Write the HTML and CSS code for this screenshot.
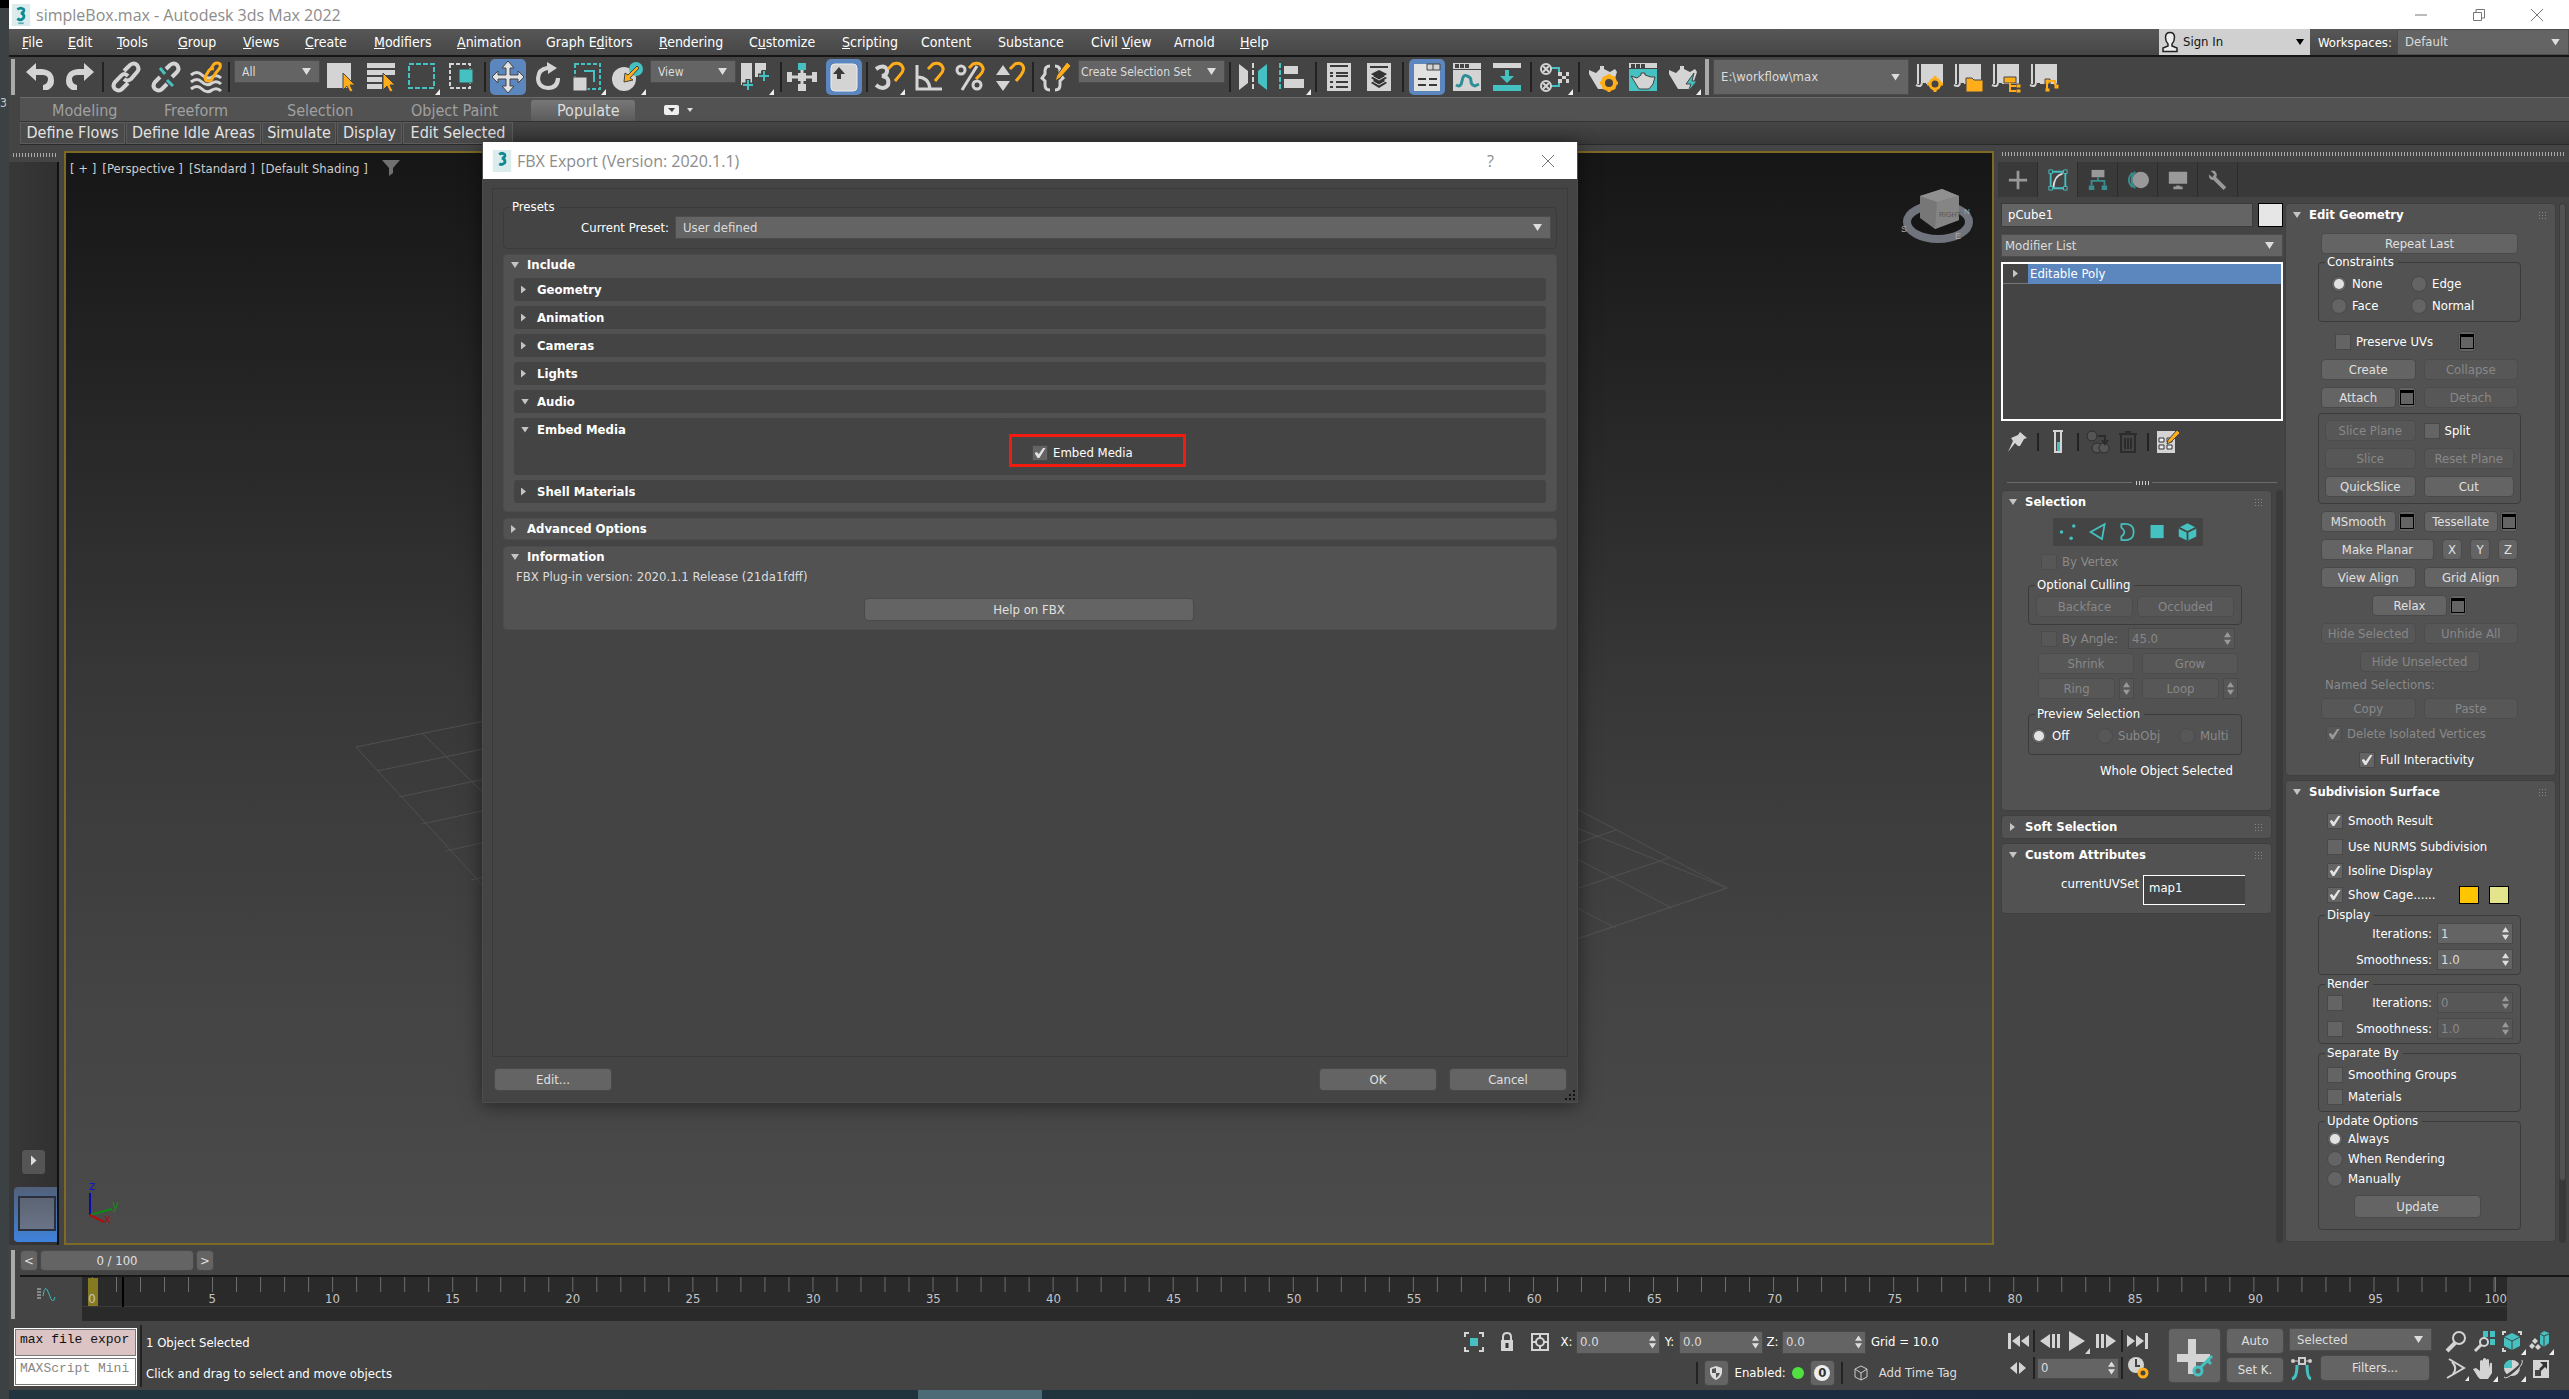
FILE: index.html
```html
<!DOCTYPE html>
<html lang="en">
<head>
<meta charset="utf-8">
<title>simpleBox.max - Autodesk 3ds Max 2022</title>
<link rel="stylesheet" href="styles.css">
</head>
<body>
<div class="backdrop" aria-hidden="true"><span>3</span></div>
<div class="app">
  <header class="titlebar">
    <svg class="logo" viewBox="0 0 20 24"><rect width="20" height="24" fill="#dcecec"/><path d="M6 6q4-3 7 0q1 3-3 4q4 1 3 5q-3 4-7 1" fill="none" stroke="#0f8a92" stroke-width="3"/><path d="M7 21h6" stroke="#58b4b8" stroke-width="2"/></svg>
    <h1>simpleBox.max - Autodesk 3ds Max 2022</h1>
    <div class="winctl">
      <button aria-label="Minimize"><svg viewBox="0 0 14 14"><path d="M1 7h12" stroke="#777"/></svg></button>
      <button aria-label="Restore"><svg viewBox="0 0 14 14"><path d="M1.500 4.500h8v8h-8zM4 4V1.500h8.500V10H10" fill="none" stroke="#777"/></svg></button>
      <button aria-label="Close"><svg viewBox="0 0 14 14"><path d="M1 1l12 12M13 1L1 13" stroke="#777"/></svg></button>
    </div>
  </header>

  <nav class="menubar">
    <div class="menus">
      <a href="#"><u>F</u>ile</a><a href="#"><u>E</u>dit</a><a href="#"><u>T</u>ools</a><a href="#"><u>G</u>roup</a><a href="#"><u>V</u>iews</a><a href="#"><u>C</u>reate</a><a href="#"><u>M</u>odifiers</a><a href="#"><u>A</u>nimation</a><a href="#">Graph E<u>d</u>itors</a><a href="#"><u>R</u>endering</a><a href="#">C<u>u</u>stomize</a><a href="#"><u>S</u>cripting</a><a href="#">Content</a><a href="#">Substance</a><a href="#">Civil <u>V</u>iew</a><a href="#">Arnold</a><a href="#"><u>H</u>elp</a>
    </div>
    <button class="signin"><svg width="18" height="22" viewBox="0 0 18 22"><path d="M9 1.500c3 0 4.500 2 4.500 5S12 12 11 13v2l5 2v3.500H2V17l5-2v-2c-1-1-2.500-3.500-2.500-6.500s1.500-5 4.500-5z" fill="#eee" stroke="#222" stroke-width="1.500"/></svg><span>Sign In</span><i class="tri"></i></button>
    <label class="ws-label" for="ws">Workspaces:</label>
    <span class="sel ws"><select id="ws"><option>Default</option></select></span>
  </nav>

  <div class="toolbar">
    <i class="vgrip"></i>
    <button class="tool" aria-label="Undo"><svg viewBox="0 0 36 36"><path d="M14 4v6h6q12 1 12 12q0 6-6 9h-5v-5q5-1 5-6q0-4-6-4h-6v6L4 13z" fill="#d4d4d4"/></svg></button>
    <button class="tool" aria-label="Redo"><svg viewBox="0 0 36 36"><path d="M22 4v6h-6Q4 11 4 22q0 6 6 9h5v-5q-5-1-5-6q0-4 6-4h6v6l10-9z" fill="#d4d4d4"/></svg></button>
    <i class="sep"></i>
    <button class="tool" aria-label="Link"><svg viewBox="0 0 36 36" fill="none" stroke="#d4d4d4" stroke-width="4"><path d="M16 12l6-6q4-3 7 0q3 4 0 7l-6 7q-4 3-7 0"/><path d="M20 17q-4-4-7 0l-6 6q-3 4 0 7q4 3 7 0l6-6"/></svg></button>
    <button class="tool" aria-label="Unlink"><svg viewBox="0 0 36 36" fill="none" stroke="#d4d4d4" stroke-width="4"><path d="M18 10l4-4q4-3 7 0q3 4 0 7l-5 5"/><path d="M12 18l-5 5q-3 4 0 7q4 3 7 0l5-5"/><path d="M12 9l5 6M19 21l6 6" stroke="#45c1c1" stroke-width="3"/></svg></button>
    <button class="tool" aria-label="Bind to space warp"><svg viewBox="0 0 36 36" fill="none"><path d="M3 16q6-5 11 0t10 2q5-3 9 1M3 23q6-5 11 0t10 1q5-3 9 1M3 30q6-5 11 0t10 1q5-3 9 1" stroke="#d4d4d4" stroke-width="3"/><path d="M22 11l4-6q3-2 6 0q1 3-1 5l-4 5M26 10q-4-1-6 3l-3 5q0 4 3 4q3 0 4-2l3-5" stroke="#ffae1a" stroke-width="3"/></svg></button>
    <i class="sep"></i>
    <span class="sel short"><select aria-label="Selection filter"><option>All</option></select></span>
    <button class="tool" aria-label="Select object"><svg viewBox="0 0 36 36"><path d="M3 4h24v25H3z" fill="#d4d4d4"/><path d="M19 14v17l4-4 3 6 3-1-3-6h5z" fill="#ffae1a" stroke="#444"/></svg></button>
    <button class="tool" aria-label="Select by name"><svg viewBox="0 0 36 36"><path d="M3 4h28v5H3zM3 11h28v5H3zM3 18h15v5H3zM3 25h15v5H3z" fill="#d4d4d4"/><path d="M19 14v17l4-4 3 6 3-1-3-6h5z" fill="#ffae1a" stroke="#444"/></svg></button>
    <button class="tool" aria-label="Rectangular region"><svg viewBox="0 0 36 36"><path d="M5 5h25v24H5z" fill="none" stroke="#45c1c1" stroke-width="2" stroke-dasharray="5 2"/><path d="M36 30v6h-5z" fill="#eee"/></svg></button>
    <button class="tool" aria-label="Window crossing"><svg viewBox="0 0 36 36"><path d="M6 5h20v24H6z" fill="none" stroke="#d4d4d4" stroke-width="2" stroke-dasharray="4 2"/><path d="M15 10h14v14H15z" fill="#45c1c1" stroke="#444"/></svg></button>
    <i class="sep"></i>
    <button class="tool on" aria-label="Move"><svg viewBox="0 0 36 36"><path d="M18 2l6 7h-4v7h8v-4l6 6-6 6v-4h-8v7h4l-6 7-6-7h4v-7H8v4l-6-6 6-6v4h8V9h-4z" fill="#e2e2e2" stroke="#444"/></svg></button>
    <button class="tool" aria-label="Rotate"><svg viewBox="0 0 36 36"><path d="M17 3l10 6-9 6v-4q-8 1-8 9 1 7 8 7 7 0 8-8h4q0 12-12 12Q6 30 6 19 7 8 17 7z" fill="#d4d4d4"/></svg></button>
    <button class="tool" aria-label="Scale"><svg viewBox="0 0 36 36"><path d="M5 5h25v25H5z" fill="none" stroke="#45c1c1" stroke-width="2" stroke-dasharray="4 2"/><path d="M3 18h14v14H3z" fill="#d4d4d4" stroke="#444"/><path d="M14 12h10v11" fill="none" stroke="#45c1c1" stroke-width="2"/><path d="M36 30v6h-5z" fill="#eee"/></svg></button>
    <button class="tool" aria-label="Place"><svg viewBox="0 0 36 36"><circle cx="14" cy="20" r="12" fill="#d4d4d4"/><circle cx="26" cy="10" r="7" fill="#45c1c1"/><path d="M27 7l2 2-9 10 3 2-9 2 1-9 3 2z" fill="#ffae1a" stroke="#444"/><path d="M36 30v6h-5z" fill="#eee"/></svg></button>
    <span class="sel short"><select aria-label="Reference coordinate system"><option>View</option></select></span>
    <button class="tool" aria-label="Pivot center"><svg viewBox="0 0 36 36"><path d="M1 4h11v22H1zM15 4h11v8h-5v6h-6z" fill="#d4d4d4"/><path d="M8 20v12M2 26h12M24 11v12M18 17h12" stroke="#444" stroke-width="5"/><path d="M8 21v10M3 26h10M24 12v10M19 17h10" stroke="#45c1c1" stroke-width="2"/><path d="M34 30v6h-5z" fill="#eee"/></svg></button>
    <i class="sep"></i>
    <button class="tool" aria-label="Manipulate"><svg viewBox="0 0 36 36"><path d="M16 9v22M4 18h24" stroke="#d4d4d4" stroke-width="3"/><path d="M12 4h8v7h-8z" fill="#45c1c1"/><path d="M1 13h5v10H1zM26 13h5v10h-5zM12 25h8v7h-8zM12 14h8v8h-8z" fill="#d4d4d4"/></svg></button>
    <button class="tool on" aria-label="Keyboard shortcut override"><svg viewBox="0 0 36 36"><rect x="5" y="5" width="26" height="27" rx="4" fill="#d4d4d4" stroke="#eee"/><path d="M13 8l6 7h-4v5h-4v-5H7z" fill="#3a3a3a"/></svg></button>
    <i class="sep"></i>
    <button class="tool" aria-label="Snaps toggle"><svg viewBox="0 0 36 36" fill="none"><path d="M4 10q7-5 11 0q1 6-5 7q8 1 6 9q-5 6-12 0" stroke="#d4d4d4" stroke-width="4"/><path d="M16 10l5-5q6-2 9 2t-2 9l-5 6" stroke="#ffae1a" stroke-width="3"/><path d="M33 30v6h-5z" fill="#eee"/></svg></button>
    <button class="tool" aria-label="Angle snap"><svg viewBox="0 0 36 36" fill="none"><path d="M5 6v24h25M5 18q12 0 13 12" stroke="#d4d4d4" stroke-width="3"/><path d="M16 10l5-5q6-2 9 2t-2 9l-5 6" stroke="#ffae1a" stroke-width="3"/></svg></button>
    <button class="tool" aria-label="Percent snap"><svg viewBox="0 0 36 36" fill="none"><circle cx="9" cy="11" r="4" stroke="#d4d4d4" stroke-width="3"/><circle cx="25" cy="26" r="4" stroke="#d4d4d4" stroke-width="3"/><path d="M25 7L10 31" stroke="#d4d4d4" stroke-width="3"/><path d="M17 9l4-4q6-2 9 2t-2 9l-4 4" stroke="#ffae1a" stroke-width="3"/></svg></button>
    <button class="tool" aria-label="Spinner snap"><svg viewBox="0 0 36 36" fill="none"><path d="M11 6l7 10H4zM11 32l7-10H4z" fill="#d4d4d4"/><path d="M18 10l5-5q6-2 8 2t-2 9l-5 6" stroke="#ffae1a" stroke-width="3"/></svg></button>
    <i class="sep"></i>
    <button class="tool" aria-label="Edit named selections"><svg viewBox="0 0 36 36" fill="none"><path d="M12 7q-5 0-5 5v3l-3 4 3 3v4q0 5 5 5M17 7q5 0 5 5v3l3 4-3 3v4q0 5-5 5" stroke="#d4d4d4" stroke-width="3"/><path d="M29 3l4 4-11 12-5 3 2-6z" fill="#ffae1a" stroke="#444"/></svg></button>
    <span class="sel short long"><select aria-label="Named selection sets"><option>Create Selection Set</option></select></span>
    <i class="sep"></i>
    <button class="tool" aria-label="Mirror"><svg viewBox="0 0 36 36"><path d="M4 5l9 7v12l-9 7z" fill="#d4d4d4"/><path d="M32 5l-9 7v12l9 7z" fill="#45c1c1"/><path d="M18 4v28" stroke="#d4d4d4" stroke-width="2" stroke-dasharray="5 2"/></svg></button>
    <button class="tool" aria-label="Align"><svg viewBox="0 0 36 36"><path d="M5 4v28" stroke="#45c1c1" stroke-width="2" stroke-dasharray="5 2"/><path d="M9 7h14v8H9zM9 20h20v9H9z" fill="#d4d4d4"/><path d="M36 30v6h-5z" fill="#eee"/></svg></button>
    <i class="sep"></i>
    <button class="tool" aria-label="Scene explorer"><svg viewBox="0 0 36 36"><path d="M6 4h24v28H6z" fill="#d4d4d4"/><path d="M9 7h18M9 14h3m3 0h12M9 17h3m3 0h12M9 23h3m3 0h12M9 28h3m3 0h12" stroke="#3a3a3a" stroke-width="2"/></svg></button>
    <button class="tool" aria-label="Layer explorer"><svg viewBox="0 0 36 36"><path d="M6 4h24v28H6z" fill="#d4d4d4"/><path d="M9 8h18" stroke="#3a3a3a" stroke-width="2"/><path d="M18 11l8 4-3 2 3 2-3 2 3 3-8 5-8-5 3-3-3-2 3-2-3-2z" fill="#333"/><path d="M11 17l7 4 7-4M11 22l7 4 7-4" fill="none" stroke="#d4d4d4"/></svg></button>
    <i class="sep"></i>
    <button class="tool on" aria-label="Toggle ribbon"><svg viewBox="0 0 36 36"><path d="M5 5h13v6h13v21H5z" fill="#e2e2e2"/><path d="M18 5h13v6H18zM24 5v6" fill="#d4d4d4" stroke="#444"/><path d="M9 20h8m3 0h8M9 26h8m3 0h8" stroke="#3a3a3a" stroke-width="2"/></svg></button>
    <button class="tool" aria-label="Curve editor"><svg viewBox="0 0 36 36"><path d="M4 4h28v28H4z" fill="#d4d4d4"/><path d="M6 5h4v4H6zM11 5h4v4h-4zM16 5h4v4h-4zM4 10h28v1H4z" fill="#444"/><path d="M7 26q5 3 6-4t5-5q4 1 4 5t4 5l4-2" fill="none" stroke="#2c8f96" stroke-width="3"/></svg></button>
    <button class="tool" aria-label="Schematic view"><svg viewBox="0 0 36 36"><path d="M4 4h28v5H4z" fill="#d4d4d4"/><path d="M4 26h28v6H4zM16 11h4v6h5l-7 7-7-7h5z" fill="#45c1c1"/></svg></button>
    <i class="sep"></i>
    <button class="tool" aria-label="Material editor"><svg viewBox="0 0 36 36" fill="none"><path d="M14 9h8v6M14 27h8v-6" stroke="#45c1c1" stroke-width="2"/><circle cx="9" cy="10" r="5" fill="#444" stroke="#d4d4d4" stroke-width="2"/><circle cx="9" cy="27" r="5" fill="#444" stroke="#d4d4d4" stroke-width="2"/><path d="M6 7l6 6m0-6l-6 6M6 24l6 6m0-6l-6 6" stroke="#d4d4d4" stroke-width="2"/><path d="M21 13h4v4h-4zm8 0h3v4h-3zm-4 4h4v3h-4zm-4 3h4v4h-4zm8 0h3v4h-3z" fill="#d4d4d4"/><path d="M36 30v6h-5z" fill="#eee"/></svg></button>
    <i class="sep"></i>
    <button class="tool" aria-label="Render setup"><svg viewBox="0 0 36 36"><path d="M4 11l7 3 4-4V7h4v3l6 3 5-3 2 3-3 9-5 8H13L4 15z" fill="#d4d4d4"/><circle cx="24" cy="24" r="6" fill="#444" stroke="#ffae1a" stroke-width="4"/><path d="M24 15v3m0 12v3m-9-9h3m12 0h3M18 18l2 2m8 8l2 2m0-12l-2 2m-8 8l-2 2" stroke="#ffae1a" stroke-width="3"/></svg></button>
    <button class="tool" aria-label="Rendered frame window"><svg viewBox="0 0 36 36"><path d="M4 4h28v5H4z" fill="#d4d4d4"/><path d="M4 10h28v22H4z" fill="#45c1c1"/><path d="M6 5h4v4H6zM11 5h4v4h-4zM16 5h4v4h-4z" fill="#444"/><path d="M6 17l6 2 4-3v-2h4v2l6 2 4 0-2 7-4 5H14z" fill="#d4d4d4" stroke="#444"/></svg></button>
    <button class="tool" aria-label="Render production"><svg viewBox="0 0 36 36"><path d="M4 11l7 3 4-4V7h4v3l6 3 5-3 2 3-3 9-5 8H13L4 15z" fill="#d4d4d4"/><path d="M29 14l-8 11h5l-3 8 9-11h-5z" fill="#45c1c1" stroke="#444"/><path d="M36 30v6h-5z" fill="#eee"/></svg></button>
    <i class="vgrip second"></i>
    <span class="sel path"><select aria-label="Project folder"><option>E:\workflow\max</option></select></span>
    <button class="tool" aria-label="Project settings"><svg viewBox="0 0 36 36"><path d="M7 5v20M5 26q6 3 6-3V6h20v18H15" stroke="#d4d4d4" stroke-width="2" fill="none"/><path d="M12 7h19v17H12z" fill="#d4d4d4"/><circle cx="24" cy="25" r="5" fill="#444" stroke="#ffae1a" stroke-width="3"/><path d="M24 17v3m0 10v3m-8-8h3m10 0h3" stroke="#ffae1a" stroke-width="3"/></svg></button>
    <button class="tool" aria-label="Open project"><svg viewBox="0 0 36 36"><path d="M7 5v20M5 26q6 3 6-3V6h20v18H15" stroke="#d4d4d4" stroke-width="2" fill="none"/><path d="M12 7h19v17H12z" fill="#d4d4d4"/><path d="M17 19h6l2 2h9v12H17z" fill="#ffae1a" stroke="#444"/></svg></button>
    <button class="tool" aria-label="Project structure"><svg viewBox="0 0 36 36"><path d="M7 5v20M5 26q6 3 6-3V6h20v18H15" stroke="#d4d4d4" stroke-width="2" fill="none"/><path d="M12 7h19v17H12z" fill="#d4d4d4"/><path d="M17 18h12v6H17zM29 25h5v4h-5zM29 30h5v4h-5z" fill="#ffae1a" stroke="#444"/><path d="M23 24v8h6m-6-5h6" stroke="#ffae1a" stroke-width="2" fill="none"/></svg></button>
    <button class="tool" aria-label="Project links"><svg viewBox="0 0 36 36"><path d="M7 5v20M5 26q6 3 6-3V6h20v18H15" stroke="#d4d4d4" stroke-width="2" fill="none"/><path d="M12 7h19v17H12z" fill="#d4d4d4"/><path d="M20 20h5v5h-5zM20 29h5v4h-5zM29 25h5v5h-5z" fill="#ffae1a" stroke="#444"/><path d="M22 24v6m2-8h6v4" stroke="#ffae1a" stroke-width="2" fill="none"/></svg></button>
  </div>

  <div class="ribbon">
    <div class="tabs">
      <a href="#">Modeling</a><a href="#">Freeform</a><a href="#">Selection</a><a href="#">Object Paint</a><a href="#" class="cur">Populate</a>
      <button class="mini" aria-label="Ribbon display"><svg width="30" height="12" viewBox="0 0 30 12"><rect x="1" y="1" width="15" height="10" rx="2" fill="#eee"/><path d="M5 4h7l-3 4z" fill="#444"/><path d="M24 4h6l-3 4z" fill="#ddd"/></svg></button>
    </div>
    <div class="subtabs"><button>Define Flows</button><button>Define Idle Areas</button><button>Simulate</button><button>Display</button><button>Edit Selected</button></div>
  </div>

  <main class="work">
    <aside class="layouts">
      <i class="hgrip"></i>
      <div class="layoutbar">
        <button class="play" aria-label="Expand"><i class="tri right"></i></button>
        <button class="tile" aria-label="Viewport layout"><i></i></button>
      </div>
    </aside>
    <section class="viewport">
      <div class="vlabel"><span>[ + ]</span><span>[Perspective ]</span><span>[Standard ]</span><span>[Default Shading ]</span><svg width="18" height="16" viewBox="0 0 18 16"><path d="M0 0h18l-7 8v5l-4 3V8z" fill="#707070"/></svg></div>
      <svg class="grid" width="1400" height="320" viewBox="0 0 1400 320" fill="none" stroke="#505050">
        <path d="M0 67L330 0M21 91L460 0M43 117L600 0M66 144L700 6M90 171L800 10M115 200L900 20M141 230L1000 30M0 67L250 340M66 53L360 340M132 40L470 340"/>
        <path d="M1000 60L1371 208L1230 256M1200 118L1371 208M1260 150L1180 177M1313 178L1190 219M1190 163L1316 228M1180 207L1260 248M1371 208L1100 300"/>
      </svg>
      <svg class="cube" width="78" height="58" viewBox="0 0 78 58"><ellipse cx="38" cy="35" rx="31" ry="17" fill="#161616" stroke="#70747c" stroke-width="8"/><path d="M20 9l22-7 17 7v24L35 42 20 31z" fill="#777"/><path d="M20 9l22-7 17 7-22 6z" fill="#909090"/><path d="M37 15l22-6v24L35 42z" fill="#858585"/><text x="39" y="30" font-size="7" fill="#555" font-family="Liberation Sans, sans-serif">RIGHT</text><text x="1" y="45" font-size="9" fill="#aaa" font-family="Liberation Sans, sans-serif">S</text><text x="55" y="52" font-size="9" fill="#aaa" font-family="Liberation Sans, sans-serif">E</text><text x="64" y="27" font-size="8" fill="#aaa" font-family="Liberation Sans, sans-serif">N</text></svg>
      <svg class="axis" width="36" height="44" viewBox="0 0 36 44"><path d="M3 12v22" stroke="#0a0aa8" stroke-width="2"/><path d="M3 34l22-6" stroke="#0c8a14" stroke-width="2"/><path d="M3 34l14 7" stroke="#b80c0c" stroke-width="2"/><text x="2" y="9" font-size="13" fill="#1414c8">z</text><text x="25" y="28" font-size="13" fill="#148a14">y</text><text x="17" y="42" font-size="13" fill="#a01414">x</text></svg>
    </section>

    <aside class="command">
      <i class="hgrip"></i>
      <div class="ctabs">
        <button aria-label="Create"><svg viewBox="0 0 24 24"><path d="M12 2v20M2 12h20" stroke="#999" stroke-width="3"/></svg></button>
        <button class="cur" aria-label="Modify"><svg viewBox="0 0 24 24" fill="none"><path d="M4 3h16v18H4z" stroke="#45c1c1" stroke-width="2"/><path d="M7 20q1-13 10-15" stroke="#ddd" stroke-width="2"/><path d="M2 1h4v4H2zM18 1h4v4h-4zM2 19h4v4H2zM18 19h4v4h-4z" fill="#444" stroke="#45c1c1"/></svg></button>
        <button aria-label="Hierarchy"><svg viewBox="0 0 24 24"><path d="M5 1h14v8H5z" fill="#999"/><path d="M2 18h6v5H2zM16 18h6v5h-6z" fill="#3c8d8d"/><path d="M12 9v4m-7 5v-5h14v5" fill="none" stroke="#3c8d8d" stroke-width="2"/></svg></button>
        <button aria-label="Motion"><svg viewBox="0 0 24 24"><path d="M6 4q-8 8 0 16M9 3q-8 9 0 18" fill="none" stroke="#3c8d8d" stroke-width="2"/><circle cx="15" cy="12" r="9" fill="#999"/></svg></button>
        <button aria-label="Display"><svg viewBox="0 0 24 24"><path d="M2 3h20v13H2zM7 19h10v3H7zM10 18h4v2h-4z" fill="#999"/></svg></button>
        <button aria-label="Utilities"><svg viewBox="0 0 24 24"><path d="M4 2l4 0q4 3 2 7l11 11-3 3L7 12Q2 12 2 6l4 3 2-3z" fill="#999"/></svg></button>
      </div>
      <div class="ccols">
        <div class="lcol">
          <div class="namerow"><input type="text" value="pCube1" aria-label="Object name"><button class="swatch w" aria-label="Object color"></button></div>
          <span class="sel modlist"><select aria-label="Modifier list"><option>Modifier List</option></select></span>
          <div class="stackbox"><div class="stackrow"><i class="tri right"></i><span>Editable Poly</span></div></div>
          <div class="stacktools">
            <button aria-label="Pin stack"><svg viewBox="0 0 24 24"><path d="M14 2l7 6-3 1-4 7-2 0-3-3-7 9 5-11-2-3 7-3z" fill="#d4d4d4"/></svg></button><i class="sep"></i>
            <button aria-label="Show end result"><svg viewBox="0 0 24 24"><path d="M7 1h10M9 1v21h6V1" fill="none" stroke="#d4d4d4" stroke-width="2"/><path d="M11 12h3v9h-3z" fill="#45c1c1"/></svg></button><i class="sep"></i>
            <button aria-label="Make unique"><svg viewBox="0 0 24 24" fill="#555" stroke="#2c2c2c"><circle cx="6" cy="6" r="5"/><circle cx="11" cy="18" r="5"/><circle cx="18" cy="18" r="5"/><path d="M12 6h7v7m-3-3l3 4 3-4" fill="none" stroke-width="2"/></svg></button>
            <button aria-label="Remove modifier"><svg viewBox="0 0 24 24" fill="none" stroke="#2c2c2c" stroke-width="2"><path d="M3 4h18M5 4v18h14V4M9 8v11M12 8v11M15 8v11M9 2h6"/></svg></button><i class="sep"></i>
            <button aria-label="Configure modifier sets"><svg viewBox="0 0 24 24"><path d="M1 1h18v22H1z" fill="#d4d4d4"/><path d="M3 8h5v4H3zM11 8h5v4h-5zM3 15h5v4H3zM11 15h5v4h-5z" fill="#eee" stroke="#333"/><path d="M21 0l3 3-9 9-4 2 1-4z" fill="#ffae1a" stroke="#444"/></svg></button>
          </div>
          <div class="splitter"><i></i><b></b><i></i></div>
          <div class="scrollrow">
            <div class="rolls">
              <section class="roll selroll">
                <h2><i class="tri"></i>Selection<i class="dots"></i></h2>
                <div class="subobj">
                  <button aria-label="Vertex"><svg viewBox="0 0 24 24" fill="#45c1c1"><circle cx="4" cy="12" r="2"/><circle cx="18" cy="5" r="2"/><circle cx="15" cy="19" r="2"/></svg></button>
                  <button aria-label="Edge"><svg viewBox="0 0 24 24"><path d="M3 12L19 3l-3 17z" fill="none" stroke="#45c1c1" stroke-width="2"/></svg></button>
                  <button aria-label="Border"><svg viewBox="0 0 24 24"><path d="M5 3q14-2 14 9T5 21v-4q7-5 0-10z" fill="none" stroke="#45c1c1" stroke-width="2"/></svg></button>
                  <button aria-label="Polygon"><svg viewBox="0 0 24 24"><path d="M4 4h15v15H4z" fill="#45c1c1"/></svg></button>
                  <button aria-label="Element"><svg viewBox="0 0 24 24"><path d="M12 2l10 5v10l-10 5-10-5V7z" fill="#45c1c1"/><path d="M2 7l10 5 10-5M12 12v10" fill="none" stroke="#444" stroke-width="2"/></svg></button>
                </div>
                <label class="ck off in1"><input type="checkbox" disabled>By Vertex</label>
                <fieldset class="cull"><legend>Optional Culling</legend><div class="pair4"><button disabled>Backface</button><button disabled>Occluded</button></div></fieldset>
                <div class="angle"><label class="ck off"><input type="checkbox" disabled>By Angle:</label><span class="spin off"><input type="text" value="45.0" aria-label="Angle" disabled></span></div>
                <div class="grow"><button disabled>Shrink</button><button disabled>Grow</button></div>
                <div class="grow"><div class="ws2"><button disabled>Ring</button><span class="spin off tiny"></span></div><div class="ws2"><button disabled>Loop</button><span class="spin off tiny"></span></div></div>
                <fieldset class="prev"><legend>Preview Selection</legend><div class="radios"><label class="ck"><input type="radio" name="pv" checked>Off</label><label class="ck off"><input type="radio" name="pv" disabled>SubObj</label><label class="ck off"><input type="radio" name="pv" disabled>Multi</label></div></fieldset>
                <p class="whole">Whole Object Selected</p>
              </section>
              <section class="roll"><h2><i class="tri right"></i>Soft Selection<i class="dots"></i></h2></section>
              <section class="roll"><h2><i class="tri"></i>Custom Attributes<i class="dots"></i></h2><div class="uv"><label for="uv">currentUVSet</label><input id="uv" type="text" value="map1"></div></section>
            </div>
            <i class="track"></i>
          </div>
        </div>

        <div class="rcol">
          <section class="roll geo">
            <h2><i class="tri"></i>Edit Geometry<i class="dots"></i></h2>
            <div class="body">
              <button>Repeat Last</button>
              <fieldset class="cons"><legend>Constraints</legend><div class="radgrid"><label class="ck"><input type="radio" name="c" checked>None</label><label class="ck"><input type="radio" name="c">Edge</label><label class="ck"><input type="radio" name="c">Face</label><label class="ck"><input type="radio" name="c">Normal</label></div></fieldset>
              <div class="preserve"><label class="ck"><input type="checkbox">Preserve UVs</label><button class="set" aria-label="Preserve settings"></button></div>
              <div class="pair"><button>Create</button><button disabled>Collapse</button></div>
              <div class="pair"><div class="ws3"><button>Attach</button><button class="set" aria-label="Attach settings"></button></div><button disabled>Detach</button></div>
              <div class="slicebox">
                <div class="pair"><button disabled>Slice Plane</button><label class="ck"><input type="checkbox">Split</label></div>
                <div class="pair"><button disabled>Slice</button><button disabled>Reset Plane</button></div>
                <div class="pair"><button>QuickSlice</button><button>Cut</button></div>
              </div>
              <div class="pair"><div class="ws3"><button>MSmooth</button><button class="set" aria-label="MSmooth settings"></button></div><div class="ws3"><button>Tessellate</button><button class="set" aria-label="Tessellate settings"></button></div></div>
              <div class="planar"><button>Make Planar</button><button>X</button><button>Y</button><button>Z</button></div>
              <div class="pair"><button>View Align</button><button>Grid Align</button></div>
              <div class="ws3 relax"><button>Relax</button><button class="set" aria-label="Relax settings"></button></div>
              <div class="pair"><button disabled>Hide Selected</button><button disabled>Unhide All</button></div>
              <button class="hideun" disabled>Hide Unselected</button>
              <p class="named">Named Selections:</p>
              <div class="pair"><button disabled>Copy</button><button disabled>Paste</button></div>
              <label class="ck off del"><input type="checkbox" checked disabled>Delete Isolated Vertices</label>
              <label class="ck full"><input type="checkbox" checked>Full Interactivity</label>
            </div>
          </section>
          <section class="roll subd">
            <h2><i class="tri"></i>Subdivision Surface<i class="dots"></i></h2>
            <div class="body2">
              <div class="checks">
                <label class="ck"><input type="checkbox" checked>Smooth Result</label>
                <label class="ck"><input type="checkbox">Use NURMS Subdivision</label>
                <label class="ck"><input type="checkbox" checked>Isoline Display</label>
                <div class="cage"><label class="ck"><input type="checkbox" checked>Show Cage......</label><button class="swatch y" aria-label="Cage color"></button><button class="swatch p" aria-label="Cage selected color"></button></div>
              </div>
              <fieldset class="iter"><legend>Display</legend>
                <div class="irow"><label for="i1">Iterations:</label><span class="spin"><input id="i1" type="text" value="1"></span></div>
                <div class="irow"><label for="s1">Smoothness:</label><span class="spin"><input id="s1" type="text" value="1.0"></span></div>
              </fieldset>
              <fieldset class="iter"><legend>Render</legend>
                <div class="irow"><span class="ck"><input type="checkbox" aria-label="Render iterations"></span><label for="i2">Iterations:</label><span class="spin off"><input id="i2" type="text" value="0" disabled></span></div>
                <div class="irow"><span class="ck"><input type="checkbox" aria-label="Render smoothness"></span><label for="s2">Smoothness:</label><span class="spin off"><input id="s2" type="text" value="1.0" disabled></span></div>
              </fieldset>
              <fieldset class="sepby"><legend>Separate By</legend><label class="ck"><input type="checkbox">Smoothing Groups</label><label class="ck"><input type="checkbox">Materials</label></fieldset>
              <fieldset class="upd"><legend>Update Options</legend><label class="ck"><input type="radio" name="u" checked>Always</label><label class="ck"><input type="radio" name="u">When Rendering</label><label class="ck"><input type="radio" name="u">Manually</label><button>Update</button></fieldset>
            </div>
          </section>
        </div>
        <div class="vscroll"><i></i></div>
      </div>
    </aside>
  </main>

  <footer class="bottom">
    <div class="timeline">
      <i class="vgrip"></i>
      <div class="tmain">
        <div class="slider"><button>&lt;</button><button class="thumb">0 / 100</button><button>&gt;</button></div>
        <div class="trackrow">
          <button class="mini-curve" aria-label="Open mini curve editor"><svg width="22" height="14" viewBox="0 0 22 14" fill="none"><path d="M1 2h4M1 5h4M1 8h4M1 11h4" stroke="#ccc"/><path d="M7 9q2-14 6-2t6 3" stroke="#3fb8b8"/></svg></button>
          <div class="trackbar"><i class="now"></i><i class="keymark"></i>
            <div class="ticks"></div>
            <div class="nums"><span>0</span><span>5</span><span>10</span><span>15</span><span>20</span><span>25</span><span>30</span><span>35</span><span>40</span><span>45</span><span>50</span><span>55</span><span>60</span><span>65</span><span>70</span><span>75</span><span>80</span><span>85</span><span>90</span><span>95</span><span>100</span></div>
          </div>
        </div>
      </div>
    </div>
    <div class="status">
      <div class="listener"><input class="pink" value="max file expor" aria-label="Macro recorder"><input placeholder="MAXScript Mini" aria-label="MAXScript listener"></div>
      <i class="sep tall"></i>
      <div class="msgs"><p>1 Object Selected</p><p>Click and drag to select and move objects</p></div>
      <div class="coords">
        <div class="crow">
          <button class="ic" aria-label="Isolate"><svg viewBox="0 0 20 20"><path d="M1 5V1h4M15 1h4v4M19 15v4h-4M5 19H1v-4" fill="none" stroke="#d4d4d4" stroke-width="2"/><path d="M6 6h8v8H6z" fill="#45c1c1"/></svg></button>
          <button class="ic" aria-label="Lock"><svg viewBox="0 0 20 20"><path d="M6 9V5q0-4 4-4t4 4v4" fill="none" stroke="#d4d4d4" stroke-width="2"/><path d="M4 8h12v11H4z" fill="#d4d4d4"/><path d="M10 11v5" stroke="#333" stroke-width="3"/></svg></button>
          <button class="ic" aria-label="Absolute mode"><svg viewBox="0 0 20 20" fill="none" stroke="#d4d4d4" stroke-width="2"><path d="M2 2h16v16H2zM10 2v5m0 6v5M2 10h5m6 0h5"/><circle cx="10" cy="10" r="4"/></svg></button>
          <label for="x">X:</label><span class="spin"><input id="x" type="text" value="0.0"></span>
          <label for="y">Y:</label><span class="spin"><input id="y" type="text" value="0.0"></span>
          <label for="z">Z:</label><span class="spin"><input id="z" type="text" value="0.0"></span>
          <span class="gridtxt">Grid = 10.0</span>
        </div>
        <div class="crow two"><i class="sep"></i><button class="sq" aria-label="Security"><svg width="16" height="16" viewBox="0 0 16 16"><path d="M8 1l6 2v5q-1 5-6 7-5-2-6-7V3z" fill="#ddd"/><path d="M8 3v5H4V4zM8 8h4q-1 3-4 5z" fill="#555"/></svg></button><span>Enabled:</span><i class="led"></i><button class="sq"><b class="zero">0</b></button><i class="sep"></i><button class="tag"><svg width="16" height="16" viewBox="0 0 16 16"><path d="M8 1l6 3v8l-6 3-6-3V4zM2 4l6 4 6-4M8 8v7" fill="none" stroke="#ccc"/></svg>Add Time Tag</button></div>
      </div>
      <div class="playback">
        <div class="prow"><button aria-label="Go to start"><svg viewBox="0 0 26 26" fill="#d4d4d4"><path d="M3 5h3v16H3zM15 7v12l-8-6zM24 7v12l-8-6z"/></svg></button><i class="sep"></i><button aria-label="Previous frame"><svg viewBox="0 0 26 26" fill="#d4d4d4"><path d="M13 6v14L3 13zM15 6h3v14h-3zM20 6h3v14h-3z"/></svg></button><button aria-label="Play"><svg viewBox="0 0 26 26" fill="#d4d4d4"><path d="M4 3l16 10L4 23zM25 20v6h-5z"/></svg></button><button aria-label="Next frame"><svg viewBox="0 0 26 26" fill="#d4d4d4"><path d="M13 6v14l10-7zM3 6h3v14H3zM8 6h3v14H8z"/></svg></button><i class="sep"></i><button aria-label="Go to end"><svg viewBox="0 0 26 26" fill="#d4d4d4"><path d="M20 5h3v16h-3zM2 7v12l8-6zM11 7v12l8-6z"/></svg></button></div>
        <div class="prow"><button aria-label="Key mode"><svg viewBox="0 0 26 26" fill="#d4d4d4"><path d="M12 7v12l-7-6zM14 7v12l7-6z"/></svg></button><i class="sep"></i><span class="spin"><input type="text" value="0" aria-label="Current frame"></span><i class="sep"></i><button aria-label="Time configuration"><svg viewBox="0 0 26 26"><circle cx="11" cy="10" r="8" fill="#d4d4d4"/><path d="M11 4v7h4" fill="none" stroke="#444" stroke-width="2"/><circle cx="18" cy="18" r="4" fill="#444" stroke="#ffae1a" stroke-width="3"/></svg></button></div>
      </div>
      <div class="keys">
        <button class="big" aria-label="Set keys"><svg width="40" height="44" viewBox="0 0 40 44"><path d="M13 5h8v15h14v8H21v12h-8V28H2v-8h11z" fill="#d4d4d4"/><path d="M37 22l-12 12M32 26l4 4" stroke="#45c1c1" stroke-width="3"/><circle cx="23" cy="37" r="4" fill="#666" stroke="#45c1c1" stroke-width="3"/></svg></button>
        <div class="k1"><button>Auto</button><button>Set K.</button></div>
        <div class="k2"><span class="sel"><select aria-label="Key selection"><option>Selected</option></select></span><div class="k3"><button class="bare" aria-label="Tangents"><svg viewBox="0 0 26 26"><path d="M3 24q5-1 5-14M18 10q0 13 4 14" fill="none" stroke="#45c1c1" stroke-width="3"/><path d="M5 6h16" stroke="#ccc"/><path d="M10 3h6v6h-6z" fill="#444" stroke="#ccc" stroke-width="2"/><circle cx="4" cy="6" r="2" fill="#ccc"/><circle cx="21" cy="6" r="2" fill="#ccc"/></svg></button><button>Filters...</button></div></div>
      </div>
      <div class="nav">
        <button aria-label="Zoom"><svg viewBox="0 0 26 26"><circle cx="15" cy="9" r="6" fill="none" stroke="#d4d4d4" stroke-width="2"/><path d="M11 14l-8 8" stroke="#d4d4d4" stroke-width="4"/></svg></button>
        <button aria-label="Zoom all"><svg viewBox="0 0 26 26"><path d="M11 2h5v6h-5zM18 2h5v6h-5zM11 10h5v6h-5zM18 10h5v6h-5z" fill="#45c1c1"/><circle cx="12" cy="13" r="4" fill="#444" stroke="#d4d4d4" stroke-width="2"/><path d="M9 16l-6 6" stroke="#d4d4d4" stroke-width="3"/></svg></button>
        <button aria-label="Zoom extents"><svg viewBox="0 0 26 26"><path d="M12 4l8 4v9l-8 4-8-4V8z" fill="#45c1c1"/><path d="M4 8l8 4 8-4M12 12v9" fill="none" stroke="#444"/><path d="M3 6V3h3m12 0h3v3M3 19v3h3" fill="none" stroke="#d4d4d4" stroke-width="2"/><path d="M26 20v6h-5z" fill="#eee"/></svg></button>
        <button aria-label="Zoom extents all"><svg viewBox="0 0 26 26"><path d="M16 2l5 2v10l-5 4-4-3V5z" fill="#45c1c1"/><path d="M12 5l4 2 5-2M16 7v11" stroke="#444" fill="none"/><path d="M4 12l3-3 3 3-3 3zM1 17l3-3 3 3-3 3zM7 18l3-3 3 3-3 3z" fill="#d4d4d4"/><path d="M26 20v6h-5z" fill="#eee"/></svg></button>
        <button aria-label="Field of view"><svg viewBox="0 0 26 26" fill="none" stroke="#d4d4d4" stroke-width="2"><path d="M5 3l15 9L3 22"/><path d="M8 6q6 6 1 12"/><path d="M25 20v5h-4z" fill="#eee" stroke="none"/></svg></button>
        <button aria-label="Pan"><svg viewBox="0 0 26 26"><path d="M6 21L1 13l3-1 4 3V5q2-2 3 0v6V3q2-2 3 0v8V4q2-2 3 0v8l1-5q2-1 2 1v9l-4 6H8z" fill="#d4d4d4"/><path d="M26 20v6h-5z" fill="#eee"/></svg></button>
        <button aria-label="Orbit"><svg viewBox="0 0 26 26"><circle cx="12" cy="12" r="8" fill="#d4d4d4"/><path d="M12 12V4q-8 0-8 8z" fill="#45c1c1"/><path d="M21 5q2 3-7 10T3 20" fill="none" stroke="#444" stroke-width="3"/><path d="M22 4q2 4-7 12T4 21" fill="none" stroke="#d4d4d4"/><path d="M26 20v6h-5z" fill="#eee"/></svg></button>
        <button aria-label="Maximize viewport"><svg viewBox="0 0 26 26"><path d="M5 4h16v18H5z" fill="#d4d4d4"/><path d="M7 14h6v6H7z" fill="#444"/><path d="M12 6h7v7l-2-2-4 4-2-2 4-4z" fill="#333"/></svg></button>
      </div>
    </div>
  </footer>
  <div class="taskbar"><i></i></div>

  <div class="dialog" role="dialog" aria-labelledby="dt">
    <header><svg class="logo" viewBox="0 0 20 24"><rect width="20" height="24" fill="#dcecec"/><path d="M7 5q3-3 6 0q1 3-3 4q4 1 3 5q-3 3-6 1" fill="none" stroke="#0f8a92" stroke-width="3"/></svg><h2 id="dt">FBX Export (Version: 2020.1.1)</h2><button class="q">?</button><button aria-label="Close"><svg width="14" height="14" viewBox="0 0 14 14"><path d="M1 1l12 12M13 1L1 13" stroke="#777"/></svg></button></header>
    <div class="dframe">
      <fieldset class="presets"><legend>Presets</legend><div><label for="preset">Current Preset:</label><span class="sel"><select id="preset"><option>User defined</option></select></span></div></fieldset>
      <section class="dpanel include"><h3><i class="tri"></i>Include</h3>
        <div class="drows">
          <h4><i class="tri right"></i>Geometry</h4>
          <h4><i class="tri right"></i>Animation</h4>
          <h4><i class="tri right"></i>Cameras</h4>
          <h4><i class="tri right"></i>Lights</h4>
          <h4><i class="tri"></i>Audio</h4>
          <div class="embed"><h4><i class="tri"></i>Embed Media</h4><div class="red"><label class="ck"><input type="checkbox" checked>Embed Media</label></div></div>
          <h4><i class="tri right"></i>Shell Materials</h4>
        </div>
      </section>
      <section class="dpanel"><h3><i class="tri right"></i>Advanced Options</h3></section>
      <section class="dpanel info"><h3><i class="tri"></i>Information</h3><p>FBX Plug-in version: 2020.1.1 Release (21da1fdff)</p><button>Help on FBX</button></section>
    </div>
    <div class="dbtns"><button>Edit...</button><span></span><button>OK</button><button>Cancel</button></div>
    <svg class="sizegrip" width="12" height="12" viewBox="0 0 12 12"><path d="M9 1h2v2H9zM5 5h2v2H5zM9 5h2v2H9zM1 9h2v2H1zM5 9h2v2H5zM9 9h2v2H9z" fill="#111"/></svg>
  </div>
</div>
</body>
</html>
```

FILE: styles.css
```css
* { box-sizing: border-box; }
body {
  margin: 0;
  display: grid;
  grid-template-columns: 9px 1fr;
  height: 100vh;
  overflow: hidden;
  background: #444;
  color: #fff;
  font: 13px/14px "DejaVu Sans Condensed", "Noto Sans", sans-serif;
}
h1, h2, h3, h4, p { margin: 0; font-size: inherit; }
i, b { font-style: normal; }
a { color: inherit; text-decoration: none; }
button, input, select { font: inherit; color: inherit; margin: 0; padding: 0; border: 0; background: none; min-width: 0; border-radius: 0; }
svg { display: block; }
fieldset { margin: 0; padding: 0; min-width: 0; border: 1px solid #3b3b3b; border-radius: 4px; }
legend { padding: 0 4px 0 2px; margin-left: 6px; }

.backdrop { background: #3c4144; border-top: 8px solid #000; color: #c8c8c8; font-size: 12px; padding-top: 88px; }
.app { position: relative; display: flex; flex-direction: column; height: 100vh; min-width: 0; overflow: hidden; }

.tri { display: inline-block; width: 8px; height: 6px; background: #c4c4c4; clip-path: polygon(0 0, 100% 0, 50% 100%); }
.tri.right { width: 5px; height: 8px; clip-path: polygon(0 0, 100% 50%, 0 100%); }
.sep { flex: none; width: 2px; height: 30px; background: #222; }
.vgrip { flex: none; width: 4px; align-self: stretch; background: radial-gradient(#aaa 0 1px, transparent 1px) 0 0 / 2px 3px; }
.hgrip { display: block; height: 4px; background: radial-gradient(#aaa 0 1px, transparent 1px) 0 0 / 3px 2px; }

.titlebar { flex: none; display: flex; align-items: center; height: 29px; background: #fff; padding: 0 18px 0 2px; }
.logo { width: 20px; height: 22px; }
.titlebar h1 { flex: 1; margin-left: 5px; font: 16px/22px "Open Sans", sans-serif; color: #8c8c8c; }
.winctl { display: flex; gap: 30px; }
.winctl button { width: 28px; display: grid; place-items: center; }
.winctl svg { width: 14px; }

.menubar { flex: none; display: flex; align-items: stretch; height: 28px; background: linear-gradient(#575757, #464646); border-bottom: 2px solid #161616; }
.menus { flex: 1; display: grid; grid-template-columns: 46px 49px 61px 65px 62px 69px 83px 89px 113px 90px 93px 79px 77px 93px 83px 66px 60px; padding-left: 13px; align-items: center; font-size: 14px; line-height: 20px; }
.signin { width: 151px; display: flex; align-items: center; gap: 4px; padding: 0 6px 0 2px; background: #d0d0d0; color: #111; }
.signin span { flex: 1; text-align: left; }
.signin .tri { background: #000; }
.ws-label { width: 87px; padding-left: 8px; line-height: 27px; white-space: nowrap; }
.ws { width: 172px; }

.sel { display: inline-grid; background: #646464; border: 1px solid #4c4c4c; }
.sel > select { grid-area: 1 / 1; appearance: none; width: 100%; padding: 0 20px 0 7px; color: #dcdcdc; }
.sel::after { content: ""; grid-area: 1 / 1; justify-self: end; align-self: center; margin-right: 8px; width: 9px; height: 7px; background: #ddd; clip-path: polygon(0 0, 100% 0, 50% 100%); pointer-events: none; }

.toolbar { flex: none; display: flex; align-items: center; gap: 4px; height: 40px; padding: 2px 0 2px 2px; background: #444; }
.toolbar .vgrip { margin-right: 3px; }
.toolbar .vgrip.second { margin: 0; }
.toolbar .sep:nth-last-of-type(-n+4) { margin: 0 1px; }
.tool { flex: none; width: 36px; height: 36px; border-radius: 5px; }
.tool.on { background: #5b86be; }
.sel.short { width: 86px; height: 23px; align-self: flex-start; margin-top: 1px; font-size: 12px; }
.sel.long { width: 147px; }
.sel.long select { padding-left: 2px; }
.sel.path { width: 196px; height: 36px; margin-right: -2px; }
.sel.path ~ .tool { margin-right: -2px; }

.ribbon { flex: none; height: 48px; margin-left: 11px; border-top: 1px solid #6b6b6b; font-size: 16px; }
.tabs { height: 24px; display: flex; align-items: stretch; background: #525252; border-bottom: 1px solid #333; color: #a0a0a0; line-height: 25px; }
.tabs a { width: 112px; padding-left: 32px; }
.tabs a:nth-child(2) { width: 123px; }
.tabs a:nth-child(3) { width: 124px; }
.tabs a:nth-child(4) { width: 152px; }
.tabs .cur { width: 104px; padding-left: 26px; margin-top: 2px; line-height: 21px; background: linear-gradient(#777, #5c5c5c); color: #ddd; border-radius: 3px 3px 0 0; }
.mini { margin-left: 28px; }
.subtabs { height: 23px; display: flex; background: linear-gradient(#464646, #383838); border-bottom: 1px solid #2a2a2a; }
.subtabs button { background: #4a4a4a; border: 1px solid #5c5c5c; color: #e2e2e2; margin-right: 1px; white-space: nowrap; width: 105px; }
.subtabs button:nth-child(2) { width: 135px; }
.subtabs button:nth-child(3) { width: 74px; }
.subtabs button:nth-child(4) { width: 65px; }
.subtabs button:nth-child(5) { width: 110px; }

.work { flex: 1; min-height: 0; display: flex; padding-top: 6px; overflow: hidden; }
.layouts { width: 55px; display: flex; flex-direction: column; }
.layouts .hgrip { width: 44px; margin: 2px 0 5px 3px; }
.layoutbar { flex: 1; width: 50px; display: flex; flex-direction: column; justify-content: flex-end; gap: 12px; padding-bottom: 3px; background: linear-gradient(90deg, #383838, #303030); border-right: 2px solid #111; }
.play { width: 25px; height: 26px; margin-left: 12px; background: #555; border: 1px solid #333; border-radius: 4px; }
.play .tri { background: #ddd; width: 6px; height: 11px; }
.tile { margin-left: 5px; width: 43px; height: 55px; padding: 9px 0 11px 4px; border-radius: 4px 0 0 4px; background: linear-gradient(#526079, #3f82dc); }
.tile i { display: block; width: 38px; height: 35px; border: 2px solid #2a313c; background: linear-gradient(#5c6474, #697486); }

.viewport { flex: 1; position: relative; overflow: hidden; border: 2px solid #7d6a24; background: linear-gradient(#161616, #383838 50%, #444 78%, #4b4b4b); }
.vlabel { display: flex; gap: 6px; padding: 7px 0 0 4px; line-height: 18px; color: #ccc; white-space: nowrap; }
.vlabel svg { margin-left: 8px; }
.grid { position: absolute; left: 290px; top: 527px; }
.cube { position: absolute; right: 14px; top: 34px; }
.axis { position: absolute; left: 21px; bottom: 18px; }

.command { flex: none; width: 575px; display: flex; flex-direction: column; padding-left: 4px; }
.command > .hgrip { flex: none; margin: 1px 3px 6px 3px; }
.ctabs { flex: none; display: flex; height: 35px; background: #393939; }
.ctabs button { width: 40px; display: grid; place-items: center; border-right: 1px solid #2c2c2c; }
.ctabs .cur { background: #444; }
.ctabs svg { width: 22px; height: 24px; }
.ccols { flex: 1; min-height: 0; display: flex; padding: 6px 3px 2px; overflow: hidden; }
.lcol { width: 282px; margin-right: 2px; display: flex; flex-direction: column; min-height: 0; }
.namerow { display: flex; gap: 5px; height: 24px; }
.namerow input { flex: 1; background: #646464; border: 1px solid #3a3a3a; padding-left: 6px; }
.swatch { width: 20px; height: 18px; border: 1px solid #000; }
.swatch.w { width: 25px; height: 24px; background: #e6e6e6; }
.swatch.y { background: #ffc600; }
.swatch.p { background: #e4e48c; }
.modlist { margin-top: 7px; height: 23px; }
.modlist select { padding-left: 3px; }
.stackbox { margin-top: 5px; height: 159px; border: 2px solid #fff; background: #444; }
.stackrow { display: flex; height: 20px; align-items: center; border-bottom: 1px solid #777; }
.stackrow .tri { margin: 0 10px; }
.stackrow span { flex: 1; background: #5b86be; line-height: 20px; padding-left: 2px; }
.stacktools { display: flex; align-items: center; height: 26px; margin: 8px 0 0 4px; gap: 4px; }
.stacktools button { width: 26px; height: 24px; display: grid; place-items: center; }
.stacktools svg { width: 24px; height: 24px; }
.stacktools .sep { height: 18px; margin: 0 2px; }
.splitter { display: flex; align-items: center; gap: 3px; height: 5px; margin: 25px 6px 0; }
.splitter i { flex: 1; height: 1px; background: #6c6c6c; }
.splitter b { width: 14px; height: 4px; background: radial-gradient(#ccc 0 1px, transparent 1px) 0 0 / 3px 2px; }
.scrollrow { flex: 1; min-height: 0; display: flex; gap: 4px; margin-top: 5px; }
.rolls { width: 271px; display: flex; flex-direction: column; gap: 4px; }
.track { width: 7px; background: #3a3a3a; border-radius: 4px; }

.roll { flex: none; background: #525252; border: 1px solid #3f3f3f; border-radius: 4px; }
.roll h2 { display: flex; align-items: center; height: 22px; padding: 0 8px 0 7px; font-weight: bold; }
.roll h2 .tri { margin-right: 8px; }
.roll h2 .tri.right { margin: 0 10px 0 1px; }
.dots { margin-left: auto; width: 9px; height: 9px; background: radial-gradient(#888 0 1px, transparent 1px) 0 0 / 3px 3px; }

.roll button, .dialog .dbtns button, .info button, .coords .sq, .keys button, .slider button { height: 21px; background: #646464; border: 1px solid #494949; border-radius: 4px; color: #e0e0e0; white-space: nowrap; }
.roll button:disabled { background: #575757; border-color: #4c4c4c; color: #888; }
.roll button.swatch { height: 18px; border: 1px solid #000; border-radius: 0; }
.roll button.swatch.y { background: #ffc600; }
.roll button.swatch.p { background: #e4e48c; }

.ck { display: flex; align-items: center; gap: 5px; height: 16px; white-space: nowrap; }
.ck.off { color: #8a8a8a; }
.ck input { appearance: none; flex: none; width: 16px; height: 16px; background: #646464; border: 1px solid #494949; display: grid; place-items: center; }
.ck input:disabled { background: #575757; border-color: #4c4c4c; }
.ck input[type=radio] { border-radius: 50%; }
.ck input[type=radio]:checked::before { content: ""; width: 10px; height: 10px; border-radius: 50%; background: #e2e2e2; }
.ck input[type=checkbox]:checked::before { content: ""; width: 11px; height: 11px; background: #e2e2e2; clip-path: polygon(0 50%, 22% 40%, 38% 62%, 78% 4%, 100% 4%, 44% 96%, 28% 96%); }
.ck input[type=checkbox]:disabled:checked::before { background: #999; }

.spin { display: inline-grid; height: 21px; background: #646464; border: 1px solid #494949; color: #dcdcdc; }
.spin input { grid-area: 1 / 1; width: 100%; padding-left: 3px; }
.spin::after { content: ""; grid-area: 1 / 1; justify-self: end; align-self: center; margin-right: 3px; width: 7px; height: 13px; background: #ddd; clip-path: polygon(50% 0, 100% 40%, 50% 40%, 50% 60%, 100% 60%, 50% 100%, 0 60%, 50% 60%, 50% 40%, 0 40%); pointer-events: none; }
.spin.off { background: #575757; color: #888; }
.spin.off::after { background: #999; }
.spin.tiny { width: 15px; }

.selroll { height: 321px; }
.subobj { width: 150px; height: 28px; margin: 5px 0 0 51px; background: #444; display: flex; padding: 0 1px; }
.roll .subobj button { width: 30px; height: 28px; background: none; border: 0; display: grid; place-items: center; }
.subobj svg { width: 21px; height: 22px; }
.in1 { margin: 8px 0 0 39px; }
.cull { margin: 8px 29px 0 26px; height: 47px; }
.pair4 { display: grid; grid-template-columns: 1fr 1fr; gap: 4px; padding: 4px 7px; }
.angle { display: flex; align-items: center; margin: 3px 0 0 39px; }
.angle .ck { width: 87px; }
.angle .spin { width: 107px; }
.grow { display: grid; grid-template-columns: 96px 96px; gap: 8px; margin: 4px 0 0 36px; }
.ws2 { display: grid; grid-template-columns: 1fr 15px; gap: 4px; }
.prev { margin: 8px 29px 0 26px; height: 48px; }
.radios { display: grid; grid-template-columns: 66px 82px 60px; padding: 7px 0 0 2px; }
.whole { margin: 9px 0 0 98px; }
.uv { display: grid; grid-template-columns: 78px 102px; gap: 4px; padding: 9px 0 8px 59px; }
.uv label { line-height: 17px; text-align: right; }
.uv input { height: 30px; background: #444; border: 1px solid #fff; border-right: 0; padding: 0 0 6px 5px; }

.rcol { width: 271px; display: flex; flex-direction: column; gap: 4px; }
.body { display: flex; flex-direction: column; gap: 7px; padding: 7px 37px 7px 35px; }
.cons { margin: -6px -3px 2px; height: 67px; }
.radgrid { display: grid; grid-template-columns: 80px 1fr; row-gap: 6px; padding: 7px 0 0 12px; }
.preserve { display: flex; justify-content: space-between; align-items: center; padding: 0 42px 0 14px; }
.set { width: 18px; display: grid; place-items: center; }
.set::before { content: ""; width: 12px; height: 11px; border: 1px solid #000; border-top-width: 3px; }
.pair { display: grid; grid-template-columns: 1fr 1fr; gap: 8px; align-items: center; }
.ws3 { display: grid; grid-template-columns: 1fr 18px; gap: 2px; }
.slicebox { display: flex; flex-direction: column; gap: 7px; margin: -2px -3px 0; padding: 6px; border: 1px solid #3b3b3b; border-radius: 4px; }
.planar { display: grid; grid-template-columns: 1fr 20px 20px 20px; gap: 8px; }
.relax { width: 95px; align-self: center; }
.hideun { width: 120px; align-self: center; }
.named { color: #8a8a8a; line-height: 12px; padding-left: 4px; }
.del { margin-left: 5px; }
.full { margin: 3px 0 0 38px; }

.body2 { padding: 10px 34px 11px 32px; }
.checks { display: flex; flex-direction: column; gap: 8px; padding-left: 9px; }
.checks .ck:first-child { margin-bottom: 2px; }
.cage { display: flex; align-items: center; gap: 10px; height: 16px; }
.cage .ck { width: 122px; }
.checks .cage .ck { margin-bottom: 0; }
.iter, .sepby, .upd { margin-top: 2px; padding: 1px 7px 4px 8px; display: grid; gap: 5px; }
.checks + .iter { margin-top: 5px; }
.irow { display: flex; align-items: center; justify-content: flex-end; gap: 5px; }
.irow .ck { margin-right: auto; }
.irow .spin { width: 76px; }
.sepby { padding: 7px 8px 6px; gap: 6px; }
.sepby legend, .upd legend, .iter legend { margin-left: -2px; }
.upd { gap: 4px; padding: 3px 8px 11px; }
.upd button { width: 127px; height: 23px; margin: 4px 0 0 27px; }
.roll .upd button { height: 23px; }
.vscroll { width: 7px; margin-left: auto; background: #383838; border-radius: 4px; }
.vscroll i { display: block; height: 94%; background: #525252; border: 1px solid #3c3c3c; border-radius: 4px; }

.bottom { flex: none; }
.timeline { display: flex; height: 78px; padding: 5px 0 4px 2px; }
.tmain { flex: 1; margin-left: 5px; }
.slider { display: flex; gap: 2px; height: 25px; }
.slider button { width: 18px; }
.slider .thumb { width: 154px; }
.trackrow { display: flex; border-top: 2px solid #161616; height: 46px; }
.mini-curve { width: 62px; padding: 0 0 10px 16px; }
.trackbar { position: relative; flex: 1; margin-right: 62px; background: linear-gradient(#2a2a2a, #2a2a2a) 0 0 / 100% 29px no-repeat, linear-gradient(#3b3b3b, #3b3b3b) 0 29px / 100% 1px no-repeat, #2a2a2a; padding: 0 11px 0 10px; }
.ticks { height: 15px; background: linear-gradient(90deg, #707070 1px, transparent 1px) 0 0 / 24px 100% round; border-right: 1px solid #707070; }
.nums { position: relative; display: flex; justify-content: space-between; line-height: 14px; color: #c4c4c4; }
.nums span { width: 0; display: flex; justify-content: center; }
.now { position: absolute; left: 6px; top: 1px; width: 10px; height: 28px; background: #857a22; }
.keymark { position: absolute; left: 40px; top: 0; width: 2px; height: 30px; background: #000; }

.status { display: flex; height: 67px; padding: 5px 14px 0 5px; }
.listener { width: 123px; height: 58px; display: grid; border: 1px solid #fff; gap: 2px; background: #fff; }
.listener input { border: 1px solid #777; padding: 0 0 5px 4px; color: #222; font: 13px/16px "Liberation Mono", monospace; background: #fff; }
.listener .pink { background: #dcc4c4; color: #111; }
.listener input::placeholder { color: #888; }
.tall { height: 62px; margin: -3px 4px 0 3px; }
.msgs { flex: 1; padding-top: 8px; display: flex; flex-direction: column; gap: 17px; }
.coords { width: 496px; display: flex; flex-direction: column; gap: 5px; padding-top: 1px; }
.crow { display: flex; align-items: center; height: 26px; padding-left: 3px; }
.ic { width: 20px; height: 20px; margin-right: 13px; }
.ic + label { margin-left: -6px; }
.crow label { width: 19px; text-align: center; }
.crow .spin { width: 84px; height: 23px; }
.gridtxt { margin-left: 5px; }
.two { justify-content: flex-end; gap: 6px; }
.coords .sq { width: 25px; height: 26px; display: grid; place-items: center; }
.zero { width: 16px; height: 16px; line-height: 16px; border-radius: 50%; background: #eee; color: #333; }
.led { width: 12px; height: 12px; border-radius: 50%; background: #50e040; }
.two .sep { height: 22px; }
.tag { display: flex; align-items: center; gap: 10px; padding-left: 4px; color: #ddd; white-space: nowrap; }
.playback { width: 146px; margin-left: 48px; display: flex; flex-direction: column; gap: 1px; }
.prow { display: flex; align-items: center; gap: 2px; }
.prow button { width: 26px; height: 26px; }
.prow .sep { height: 22px; }
.prow .spin { flex: 1; }
.keys { display: grid; grid-template-columns: 53px 58px 143px; gap: 5px; margin-left: 17px; height: 55px; }
.keys .big { height: 55px; display: grid; place-items: center; }
.k1, .k2 { display: grid; gap: 2px; }
.keys .k1 button { height: 26px; }
.k2 .sel { height: 23px; }
.k3 { display: grid; grid-template-columns: 26px 110px; gap: 5px; height: 26px; }
.keys .k3 button { height: 26px; }
.keys .k3 .bare { background: none; border: 0; }
.nav { display: grid; grid-template-columns: repeat(4, 28px); grid-auto-rows: 27px; margin-left: 11px; }
.nav svg { width: 26px; height: 26px; margin: auto; }
.taskbar { flex: none; height: 9px; background: linear-gradient(90deg, #20353d, #1f333d 50%, #1a2840 80%, #1b2a48); }
.taskbar i { display: block; width: 124px; height: 9px; margin-left: 909px; background: #4d6b76; }

.dialog { position: absolute; left: 473px; top: 142px; width: 1096px; height: 961px; display: flex; flex-direction: column; background: #444; border: 1px solid #4c4c4c; border-top: 0; box-shadow: 0 2px 18px rgba(0, 0, 0, .5); }
.dialog header { flex: none; display: flex; align-items: center; height: 37px; padding: 0 22px 0 9px; background: #fff; color: #8c8c8c; }
.dialog header h2 { flex: 1; margin-left: 5px; font: 16px/22px "Open Sans", sans-serif; }
.dialog header .q { font: 16px/20px "Open Sans", sans-serif; margin-right: 47px; }
.dframe { flex: 1; margin: 9px 9px 11px; padding: 11px 10px; border: 1px solid #3a3a3a; display: flex; flex-direction: column; gap: 6px; }
.presets { height: 49px; margin-bottom: -1px; }
.presets > div { display: grid; grid-template-columns: 1fr 876px; gap: 6px; padding: 2px 5px 0; align-items: center; }
.presets label { text-align: right; }
.presets .sel { height: 23px; }
.dpanel { background: #525252; border: 1px solid #4c4c4c; border-radius: 4px; }
.dpanel h3 { display: flex; align-items: center; height: 20px; padding-left: 7px; }
.dpanel .tri { margin-right: 8px; }
.dpanel .tri.right { margin-right: 11px; }
.drows { display: grid; gap: 5px; padding: 3px 10px 8px; }
.drows h4 { display: flex; align-items: center; height: 23px; padding-left: 7px; background: #444; border-radius: 3px; }
.embed { height: 57px; background: #444; border-radius: 3px; display: flex; }
.embed h4 { width: 495px; }
.red { width: 177px; height: 33px; margin-top: 16px; padding: 8px 0 0 20px; border: 3px solid #f21b0e; }
.info { height: 84px; }
.info p { padding: 3px 12px 0; color: #ddd; }
.info button { display: block; width: 330px; height: 23px; margin: 14px 0 0 360px; }
.dbtns { display: grid; grid-template-columns: 118px 1fr 118px 118px; column-gap: 12px; padding: 0 10px 11px 11px; }
.dialog .dbtns button { height: 23px; }
.sizegrip { position: absolute; right: 1px; bottom: 1px; }
```
